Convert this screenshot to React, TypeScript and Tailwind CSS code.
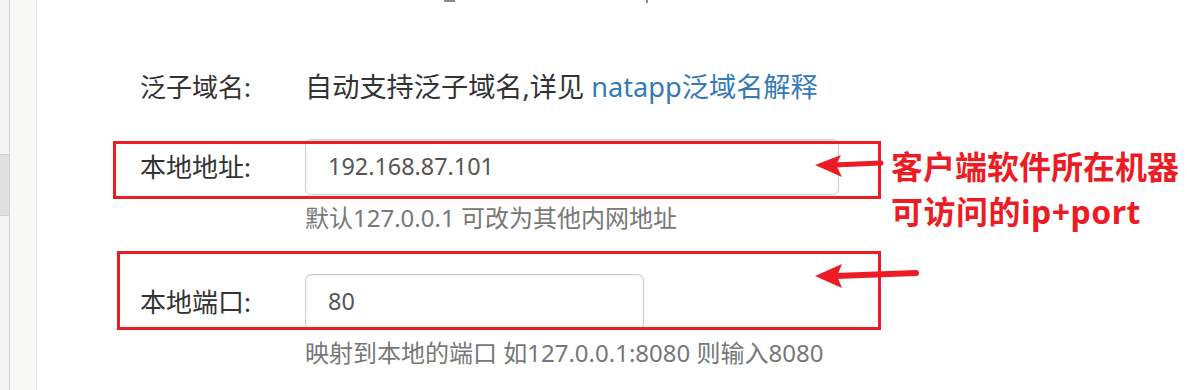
import React from "react";

const base = {
  fontFamily: '"Noto Sans", "Noto Sans CJK SC", sans-serif',
};
const red = {
  fontFamily: '"Noto Sans", "Noto Sans CJK SC", sans-serif',
};

export default function App() {
  return (
    <div
      className="relative w-[1187px] h-[390px] overflow-hidden bg-white flex"
      style={base}
    >
      {/* left strip */}
      <div className="w-[37px] h-full flex shrink-0">
        <div className="w-[10px] h-full bg-[#f4f4f4] border-r border-[#d2d2d2] flex flex-col">
          <div className="h-[154px]" />
          <div className="h-[62px] bg-[#e0e0e0] border-y border-[#cdcdcd]" />
        </div>
        <div className="w-[27px] h-full bg-[#f8f8f6] border-r border-[#e4e4e4]" />
      </div>

      {/* main form */}
      <div className="flex-1 pl-[103px] pt-[59px] text-[#333]">
        <div className="grid grid-cols-[165px_1fr] items-center h-[56px]">
          <div className="text-[26px]">泛子域名:</div>
          <div className="text-[27.2px]">
            自动支持泛子域名,详见{" "}
            <span className="text-[#337ab7]">natapp泛域名解释</span>
          </div>
        </div>

        <div className="grid grid-cols-[165px_534px] items-center mt-[24px]">
          <div className="text-[26px]">本地地址:</div>
          <div className="h-[56px] border border-[#cccccc] rounded-[6px] px-[22px] flex items-center text-[23.4px] text-[#555] shadow-[inset_0_1px_2px_rgba(0,0,0,0.075)]">
            192.168.87.101
          </div>
        </div>
        <div className="ml-[165px] mt-[6px] leading-[34px] text-[24px] text-[#777]">
          默认127.0.0.1 可改为其他内网地址
        </div>

        <div className="grid grid-cols-[165px_339px] items-center mt-[39px]">
          <div className="text-[26px]">本地端口:</div>
          <div className="h-[56px] border border-[#cccccc] rounded-[6px] px-[22px] flex items-center text-[23.4px] text-[#555] shadow-[inset_0_1px_2px_rgba(0,0,0,0.075)]">
            80
          </div>
        </div>
        <div className="ml-[165px] mt-[6px] leading-[34px] text-[24px] text-[#777]">
          映射到本地的端口 如127.0.0.1:8080 则输入8080
        </div>
      </div>

      {/* cut-off marks at top */}
      <div className="absolute left-[444px] top-0 w-[11px] h-[2px] bg-[#8a8a8a]" />
      <div className="absolute left-[646px] top-0 w-[2px] h-[3px] bg-[#7d8da3]" />

      {/* annotation boxes */}
      <div className="absolute left-[113px] top-[141px] w-[768px] h-[58px] border-[3px] border-[#ed1c24]" />
      <div className="absolute left-[117px] top-[251px] w-[764px] h-[79px] border-[3px] border-[#ed1c24]" />

      {/* arrows */}
      <svg
        className="absolute left-0 top-0"
        width="1187"
        height="390"
        viewBox="0 0 1187 390"
      >
        <line
          x1="834"
          y1="165"
          x2="881"
          y2="163"
          stroke="#ed1c24"
          strokeWidth="5"
          strokeLinecap="round"
        />
        <polygon points="815,165 841,155 836,165 842,177" fill="#ed1c24" />
        <line
          x1="836"
          y1="276"
          x2="916"
          y2="273"
          stroke="#ed1c24"
          strokeWidth="6"
          strokeLinecap="round"
        />
        <polygon points="815,276 842,264 837,276 842,288" fill="#ed1c24" />
      </svg>

      {/* annotation text */}
      <div
        className="absolute left-[891px] top-[144px] text-[32px] leading-[45px] font-bold text-[#ed1c24]"
        style={red}
      >
        <div>客户端软件所在机器</div>
        <div className="tracking-[0.5px]">可访问的ip+port</div>
      </div>
    </div>
  );
}
